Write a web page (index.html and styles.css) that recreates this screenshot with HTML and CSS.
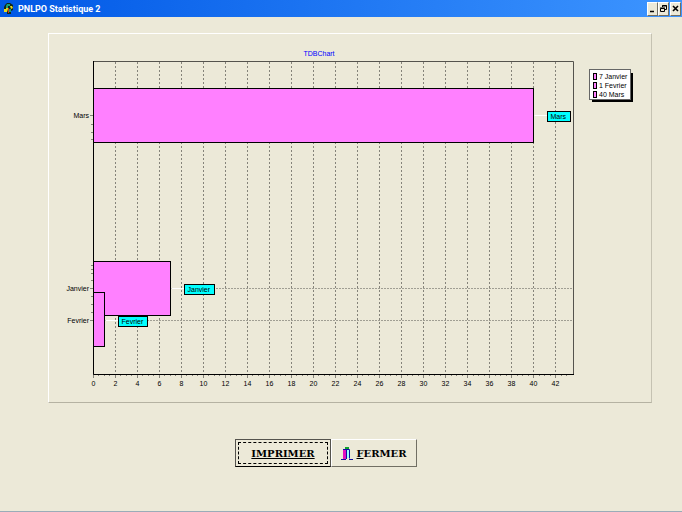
FILE: index.html
```
<!DOCTYPE html>
<html lang="fr">
<head>
  <meta charset="UTF-8">
  <meta name="viewport" content="width=device-width, initial-scale=1.0">
  <title>PNLPO Statistique 2</title>
  <link rel="stylesheet" href="styles.css">
</head>
<body>
  <header class="titlebar">
    <svg class="app-icon" viewBox="0 0 11 11" aria-hidden="true">
      <path fill="#102818" d="M2 2l2-2h3l3 2v5l-2 1v3H4V9L1 8V4z"/>
      <path fill="#e8d820" d="M1 6h2V4l2-2v4L4 9H1zM7 3h2l1 2-2 1z"/>
      <path fill="#18a078" d="M4 1h3v2H5v2H3V3zM6 6h2v3H6z"/>
      <path fill="#c83820" d="M5 5h1v5H5z"/>
    </svg>
    <h1>PNLPO Statistique 2</h1>
    <div class="window-buttons">
      <button type="button" aria-label="Réduire"><svg viewBox="0 0 9 9"><path d="M2 7.5h4" stroke-width="1.5"/></svg></button>
      <button type="button" aria-label="Restaurer"><svg viewBox="0 0 9 9"><path d="M3.5 3V1.5h4v4H6M3 2h5M1.5 4.5h4v3h-4zM1 4h5"/></svg></button>
      <button type="button" class="close" aria-label="Fermer la fenêtre"><svg viewBox="0 0 9 9"><path d="M2 2l5 5M7 2l-5 5" stroke-width="1.6"/></svg></button>
    </div>
  </header>

  <main>
    <div class="panel">
      <svg class="chart" viewBox="0 0 602 367" role="img" aria-label="TDBChart">
        <text class="chart-title" x="270" y="21">TDBChart</text>
        <g id="grid"></g>
        <path class="row-line" d="M44 253.5H524M44 285.5H524"/>
        <path class="frame" d="M44 26.5H524.5V339"/>
        <path class="axis" d="M44.5 26V339.5H525"/>
        <path class="tick" d="M42 89.5h2M42 97.5h2M42 104.5h2M42 230.5h2M42 234.5h2M42 238.5h2M42 245.5h2M42 261.5h2M42 269.5h2M42 277.5h2"/>
        <g id="bars"></g>
        <g id="legend">
          <rect x="543" y="38" width="41" height="29"/>
          <rect class="legend-box" x="540.5" y="34.5" width="41" height="30"/>
        </g>
      </svg>
    </div>

    <div class="actions">
      <button type="button" class="btn btn-default"><span class="caption"><u>IMPRIMER</u></span></button>
      <button type="button" class="btn">
        <svg class="door" viewBox="0 0 12 13" aria-hidden="true">
          <path fill="#e010c0" d="M2 3h3v9H2z"/>
          <path fill="#10a030" d="M4 0h4v2H4z"/>
          <path fill="#9ff" d="M6 3h2v8H6z"/>
          <path fill="none" stroke="#1010a0" d="M0 12.5h5M5.5 12V2.5M2 2.5h6.5v9M8 12.5h4"/>
        </svg>
        <span><u>F</u>ERMER</span>
      </button>
    </div>
  </main>

  <script>
    const data = [
      { name: 'Janvier', value: 7, y: 226, h: 54, label: 253, mark: 31 },
      { name: 'Fevrier', value: 1, y: 257, h: 54, label: 285, mark: 30 },
      { name: 'Mars', value: 40, y: 53, h: 54, label: 80, mark: 24 }
    ];
    const left = 44;
    const bottom = 339;
    const unit = 11.02;

    function scale(v) {
      return Math.floor(left + v * unit) + 0.5;
    }

    // Vertical grid, numbers and small ticks
    let grid = '';
    for (let v = 0; v <= 42; v += 2) {
      const x = scale(v);
      if (v > 0) grid += `<path class="grid-line" d="M${x} 27V${bottom}"/>`;
      grid += `<path class="tick" d="M${x} ${bottom}v4"/>`;
      grid += `<text class="number" x="${x}" y="351">${v}</text>`;
      for (const part of [0.5, 1, 1.5]) {
        if (v + part < 43.5) grid += `<path class="tick" d="M${scale(v + part)} ${bottom}v2"/>`;
      }
    }
    document.getElementById('grid').innerHTML = grid;

    let bars = '';
    let legend = '';
    data.forEach((d, i) => {
      const end = scale(d.value);
      const markX = end + 14;
      bars += `<rect class="bar" x="44.5" y="${d.y + 0.5}" width="${end - 44.5}" height="${d.h}"/>
        <path class="link" d="M${end + 1} ${d.label + 0.5}H${markX}"/>
        <path class="tick" d="M41 ${d.label + 0.5}h3"/>
        <text class="name" x="40" y="${d.label + 3}">${d.name}</text>
        <rect class="mark" x="${markX}" y="${d.label - 4 + 0.5}" width="${d.mark - 1}" height="10"/>
        <text x="${markX + 3}" y="${d.label + 4}">${d.name}</text>`;
      const y = 38 + i * 9;
      legend += `<rect class="bar" x="544.5" y="${y + 0.5}" width="3" height="6"/>
        <text x="550" y="${y + 6}">${d.value} ${d.name}</text>`;
    });
    document.getElementById('bars').innerHTML = bars;
    document.getElementById('legend').innerHTML += legend;
  </script>
</body>
</html>
```
FILE: styles.css
```
* { box-sizing: border-box; }
body { margin: 0; min-height: 100vh; background: #ece9d8; color: #000; font-family: "Liberation Sans", Arial, sans-serif; border-bottom: 1px solid #9aacb8; }
.titlebar { display: flex; align-items: center; height: 17px; padding: 0 1px 0 3px; background: linear-gradient(to right, #0058e6, #3d95ff); color: #fff; }
.titlebar h1 { flex: 1; margin: 0 0 0 4px; font: bold 9px Roboto, sans-serif; }
.app-icon { width: 11px; height: 11px; }
.window-buttons { display: flex; }
.window-buttons button { width: 11px; height: 14px; padding: 0; border: 1px solid; border-color: #fff #716f64 #716f64 #fff; background: #ece9d8; line-height: 0; }
.window-buttons .close { margin-left: 1px; }
.window-buttons svg { width: 9px; height: 9px; fill: none; stroke: #000; }

main { padding: 16px 30px 0 48px; }
.panel { border: 1px solid; border-color: #fff #c5c2b2 #b5b2a2 #fff; padding-top: 1px; }
.chart { display: block; width: 100%; font-size: 7px; }
.chart-title { fill: #00f; text-anchor: middle; }
.number { text-anchor: middle; }
.name { text-anchor: end; }
.grid-line { stroke: #85837a; stroke-dasharray: 2 2; }
.row-line { stroke: #a09e93; stroke-dasharray: 2 1; }
.tick { stroke: #85837a; }
.frame { fill: none; stroke: #55534d; }
.axis { fill: none; stroke: #000; }
.bar { fill: #ff80ff; stroke: #000; }
.link { stroke: #fff; }
.mark { fill: #0ff; stroke: #000; }
.legend-box { fill: #fff; stroke: #666; }

.actions { display: flex; justify-content: center; margin-top: 36px; padding-right: 48px; }
.btn { display: flex; align-items: center; justify-content: center; gap: 3px; width: 86px; height: 28px; padding: 0; border: 1px solid; border-color: #fff #716f64 #716f64 #fff; background: #ece9d8; color: #000; font: bold 10px "DejaVu Serif", serif; }
.btn-default { width: 96px; padding: 2px; border-color: #55534d #55534d #000 #55534d; }
.caption { display: flex; align-items: center; justify-content: center; width: 100%; height: 100%; border: 1px dashed #000; }
.door { flex: none; width: 12px; height: 13px; }
```
